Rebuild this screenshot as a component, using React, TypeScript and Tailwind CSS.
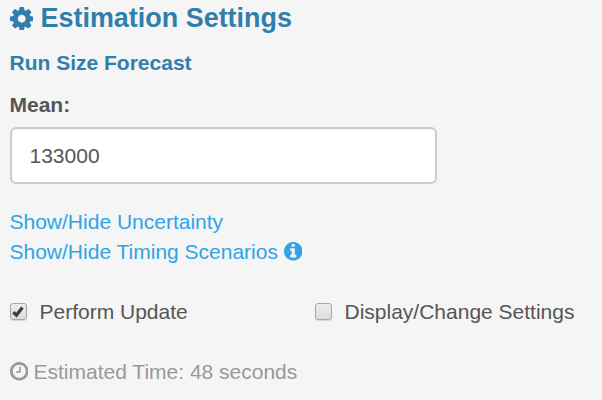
import { useState } from "react";

const CIRCLE = "M1664 896q0 209-103 385.5t-279.5 279.5-385.5 103-385.5-103-279.5-279.5-103-385.5 103-385.5 279.5-279.5 385.5-103 385.5 103 279.5 279.5 103 385.5z";
const COG = "M1152 896q0-106-75-181t-181-75-181 75-75 181 75 181 181 75 181-75 75-181zm512-109v222q0 12-8 23t-20 13l-185 28q-19 54-39 91 35 50 107 138 10 12 10 25t-9 23q-27 37-99 108t-94 71q-12 0-26-9l-138-108q-44 23-91 38-16 136-29 186-7 28-36 28h-222q-14 0-24.5-8.5t-11.5-21.5l-28-184q-49-16-90-37l-141 107q-10 9-25 9-14 0-25-11-126-114-165-168-7-10-7-23 0-12 8-23 15-21 51-66.5t54-70.5q-27-50-41-99l-183-27q-13-2-21-12.5t-8-23.5v-222q0-12 8-23t19-13l186-28q14-46 39-92-40-57-107-138-10-12-10-24 0-10 9-23 26-36 98.5-107.5t94.5-71.5q13 0 26 10l138 107q44-23 91-38 16-136 29-186 7-28 36-28h222q14 0 24.5 8.5t11.5 21.5l28 184q49 16 90 37l142-107q9-9 24-9 13 0 25 10 129 119 165 170 7 8 7 22 0 12-8 23-15 21-51 66.5t-54 70.5q26 50 41 98l183 28q13 2 21 12.5t8 23.5z";
const INFO = "M1152 1376v-160q0-14-9-23t-23-9h-96v-512q0-14-9-23t-23-9h-320q-14 0-23 9t-9 23v160q0 14 9 23t23 9h96v320h-96q-14 0-23 9t-9 23v160q0 14 9 23t23 9h448q14 0 23-9t9-23zm-128-896v-160q0-14-9-23t-23-9h-192q-14 0-23 9t-9 23v160q0 14 9 23t23 9h192q14 0 23-9t9-23z" + CIRCLE;
const CLOCK = "M1024 544v448q0 14-9 23t-23 9h-320q-14 0-23-9t-9-23v-64q0-14 9-23t23-9h224v-352q0-14 9-23t23-9h64q14 0 23 9t9 23zm416 352q0-148-73-273t-198-198-273-73-273 73-198 198-73 273 73 273 198 198 273 73 273-73 198-198 73-273z" + CIRCLE;

function Icon({ path, className }: { path: string; className: string }) {
  return (
    <svg viewBox="128 128 1536 1536" fill="currentColor" fillRule="evenodd" className={`shrink-0 ${className}`} aria-hidden="true">
      <path d={path} />
    </svg>
  );
}

function Checkbox({ label, initial, className }: { label: string; initial: boolean; className: string }) {
  const [checked, setChecked] = useState(initial);
  return (
    <label className={`flex items-center ${className}`}>
      <input type="checkbox" className="sr-only" checked={checked} onChange={() => setChecked(!checked)} />
      <span className="mr-[13px] mb-[1px] ml-[0.5px] flex size-[16.5px] shrink-0 items-center justify-center rounded-[3px] border border-[#a6a6a6] bg-linear-to-b from-[#ededed] to-[#dcdcdc] shadow-[0_1px_1px_#00000020]">
        {checked && (
          <svg viewBox="0 0 12 12" className="size-[12px] shrink-0" fill="none" stroke="#3e3e3e" strokeWidth="3.2" aria-hidden="true">
            <path d="M1.3 6.2 4.5 9.1 10.4 1.5" />
          </svg>
        )}
      </span>
      {label}
    </label>
  );
}

export default function App() {
  return (
    <div className="h-[400px] w-[602px] overflow-hidden bg-[#f5f5f5] pt-[1px] pl-[9.5px] font-['Liberation_Sans',Arial,sans-serif] text-[21px] leading-[30px] text-[#555]">
      <h2 className="flex h-[34px] items-center text-[26.95px] font-bold text-[#317eac]">
        <Icon path={COG} className="mt-[1px] mr-[7.5px] size-[23.5px]" />
        Estimation Settings
      </h2>
      <h3 className="mt-[13px] font-bold text-[#317eac]">Run Size Forecast</h3>
      <label htmlFor="mean" className="mt-[12px] block font-bold">Mean:</label>
      <input id="mean" className="mt-[7px] ml-[0.5px] block h-[57px] w-[427px] rounded-[6px] border-2 border-[#ccc] bg-white px-[17.5px] shadow-[inset_0_1px_2px_rgba(0,0,0,0.06)] outline-none" defaultValue="133000" />
      <div className="mt-[23px] text-[#2fa4e7]">Show/Hide Uncertainty</div>
      <div className="flex items-center text-[#2fa4e7]">
        Show/Hide Timing Scenarios
        <Icon path={INFO} className="mb-[1px] ml-[6px] size-[18.5px]" />
      </div>
      <div className="mt-[30px] flex">
        <Checkbox label="Perform Update" initial className="w-[305px]" />
        <Checkbox label="Display/Change Settings" initial={false} className="whitespace-nowrap" />
      </div>
      <div className="mt-[30px] flex items-center text-[#999]">
        <Icon path={CLOCK} className="mr-[5.5px] mb-[1px] size-[18.5px]" />
        Estimated Time: 48 seconds
      </div>
    </div>
  );
}
